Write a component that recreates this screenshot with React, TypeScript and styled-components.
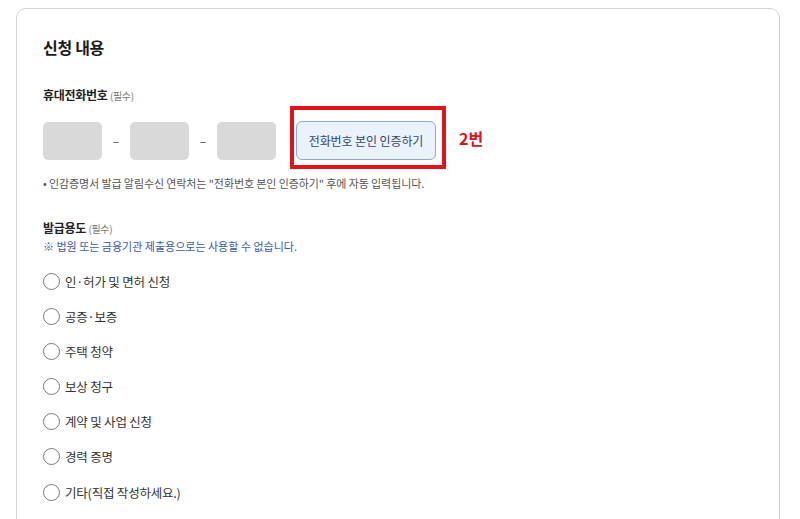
import styled, { createGlobalStyle } from 'styled-components';

const GlobalStyle = createGlobalStyle`
    html, body {
        margin: 0;
        padding: 0;
        background: #ffffff;
    }

    body {
        font-family: "Noto Sans CJK KR", "Noto Sans", sans-serif;
        color: #222;
    }
`;

const purposes = [
    '인·허가 및 면허 신청',
    '공증·보증',
    '주택 청약',
    '보상 청구',
    '계약 및 사업 신청',
    '경력 증명',
    '기타(직접 작성하세요.)',
];

export default function App() {
    return (
        <>
            <GlobalStyle />
            <Page>
                <Card>
                    <Title>신청 내용</Title>

                    <FieldLabel>
                        휴대전화번호 <Required>(필수)</Required>
                    </FieldLabel>

                    <PhoneRow>
                        <PhoneBox aria-label="phone part 1" />
                        <Dash>–</Dash>
                        <PhoneBox aria-label="phone part 2" />
                        <Dash>–</Dash>
                        <PhoneBox aria-label="phone part 3" />
                        <Highlight>
                            <VerifyButton type="button">전화번호 본인 인증하기</VerifyButton>
                        </Highlight>
                        <StepMark>2번</StepMark>
                    </PhoneRow>

                    <Note>• 인감증명서 발급 알림수신 연락처는 "전화번호 본인 인증하기" 후에 자동 입력됩니다.</Note>

                    <FieldLabel $top={28}>
                        발급용도 <Required>(필수)</Required>
                    </FieldLabel>
                    <Warning>※ 법원 또는 금융기관 제출용으로는 사용할 수 없습니다.</Warning>

                    <RadioList>
                        {purposes.map((item) => (
                            <RadioRow key={item}>
                                <RadioCircle />
                                <RadioText>{item}</RadioText>
                            </RadioRow>
                        ))}
                    </RadioList>
                </Card>
            </Page>
        </>
    );
}

const Page = styled.div`
    width: 800px;
    height: 519px;
    overflow: hidden;
    padding: 8px 20px 0 16px;
    box-sizing: border-box;
`;

const Card = styled.section`
    border: 1px solid #d2d2d2;
    border-radius: 10px;
    padding: 26px 27px 40px 26px;
    min-height: 600px;
    box-sizing: border-box;
`;

const Title = styled.h2`
    margin: 0;
    font-size: 16px;
    font-weight: 700;
    line-height: 24px;
    color: #1a1a1a;
    letter-spacing: -0.3px;
`;

const FieldLabel = styled.div<{ $top?: number }>`
    margin-top: ${(props) => props.$top ?? 27}px;
    font-size: 12px;
    font-weight: 700;
    line-height: 18px;
    color: #222;
    letter-spacing: -0.3px;
`;

const Required = styled.span`
    font-size: 10px;
    font-weight: 400;
    color: #777;
`;

const PhoneRow = styled.div`
    display: flex;
    align-items: center;
    margin-top: 7px;
`;

const PhoneBox = styled.div`
    width: 59px;
    height: 38px;
    border-radius: 5px;
    background: #d9d9d9;
`;

const Dash = styled.span`
    width: 28px;
    text-align: center;
    font-size: 12px;
    color: #444;
`;

const Highlight = styled.div`
    margin-left: 14px;
    margin-top: -6px;
    padding: 11px 6px 5px 2px;
    border: 4px solid #e0141b;
`;

const VerifyButton = styled.button`
    display: block;
    width: 140px;
    height: 39px;
    border: 1px solid #8fa9d2;
    border-radius: 6px;
    background: #eaf2fc;
    color: #34466a;
    font-family: "Noto Sans CJK KR", "Noto Sans", sans-serif;
    font-size: 12px;
    letter-spacing: -0.1px;
    padding: 0;
`;

const StepMark = styled.span`
    margin-left: 13px;
    margin-top: -6px;
    font-size: 16px;
    font-weight: 700;
    color: #d5141b;
`;

const Note = styled.p`
    margin: 6px 0 0;
    font-size: 11px;
    line-height: 16px;
    color: #555;
    letter-spacing: -0.1px;
`;

const Warning = styled.p`
    margin: 0;
    font-size: 11px;
    line-height: 16px;
    color: #3d5aa8;
`;

const RadioList = styled.ul`
    list-style: none;
    margin: 17px 0 0;
    padding: 0;
    display: flex;
    flex-direction: column;
    gap: 15.2px;
`;

const RadioRow = styled.li`
    display: flex;
    align-items: center;
    gap: 5px;
    height: 20px;
`;

const RadioCircle = styled.span`
    width: 15px;
    height: 15px;
    border: 1px solid #7a7a7a;
    border-radius: 50%;
    background: #fff;
`;

const RadioText = styled.span`
    font-size: 12.5px;
    color: #333;
    letter-spacing: -0.2px;
`;
